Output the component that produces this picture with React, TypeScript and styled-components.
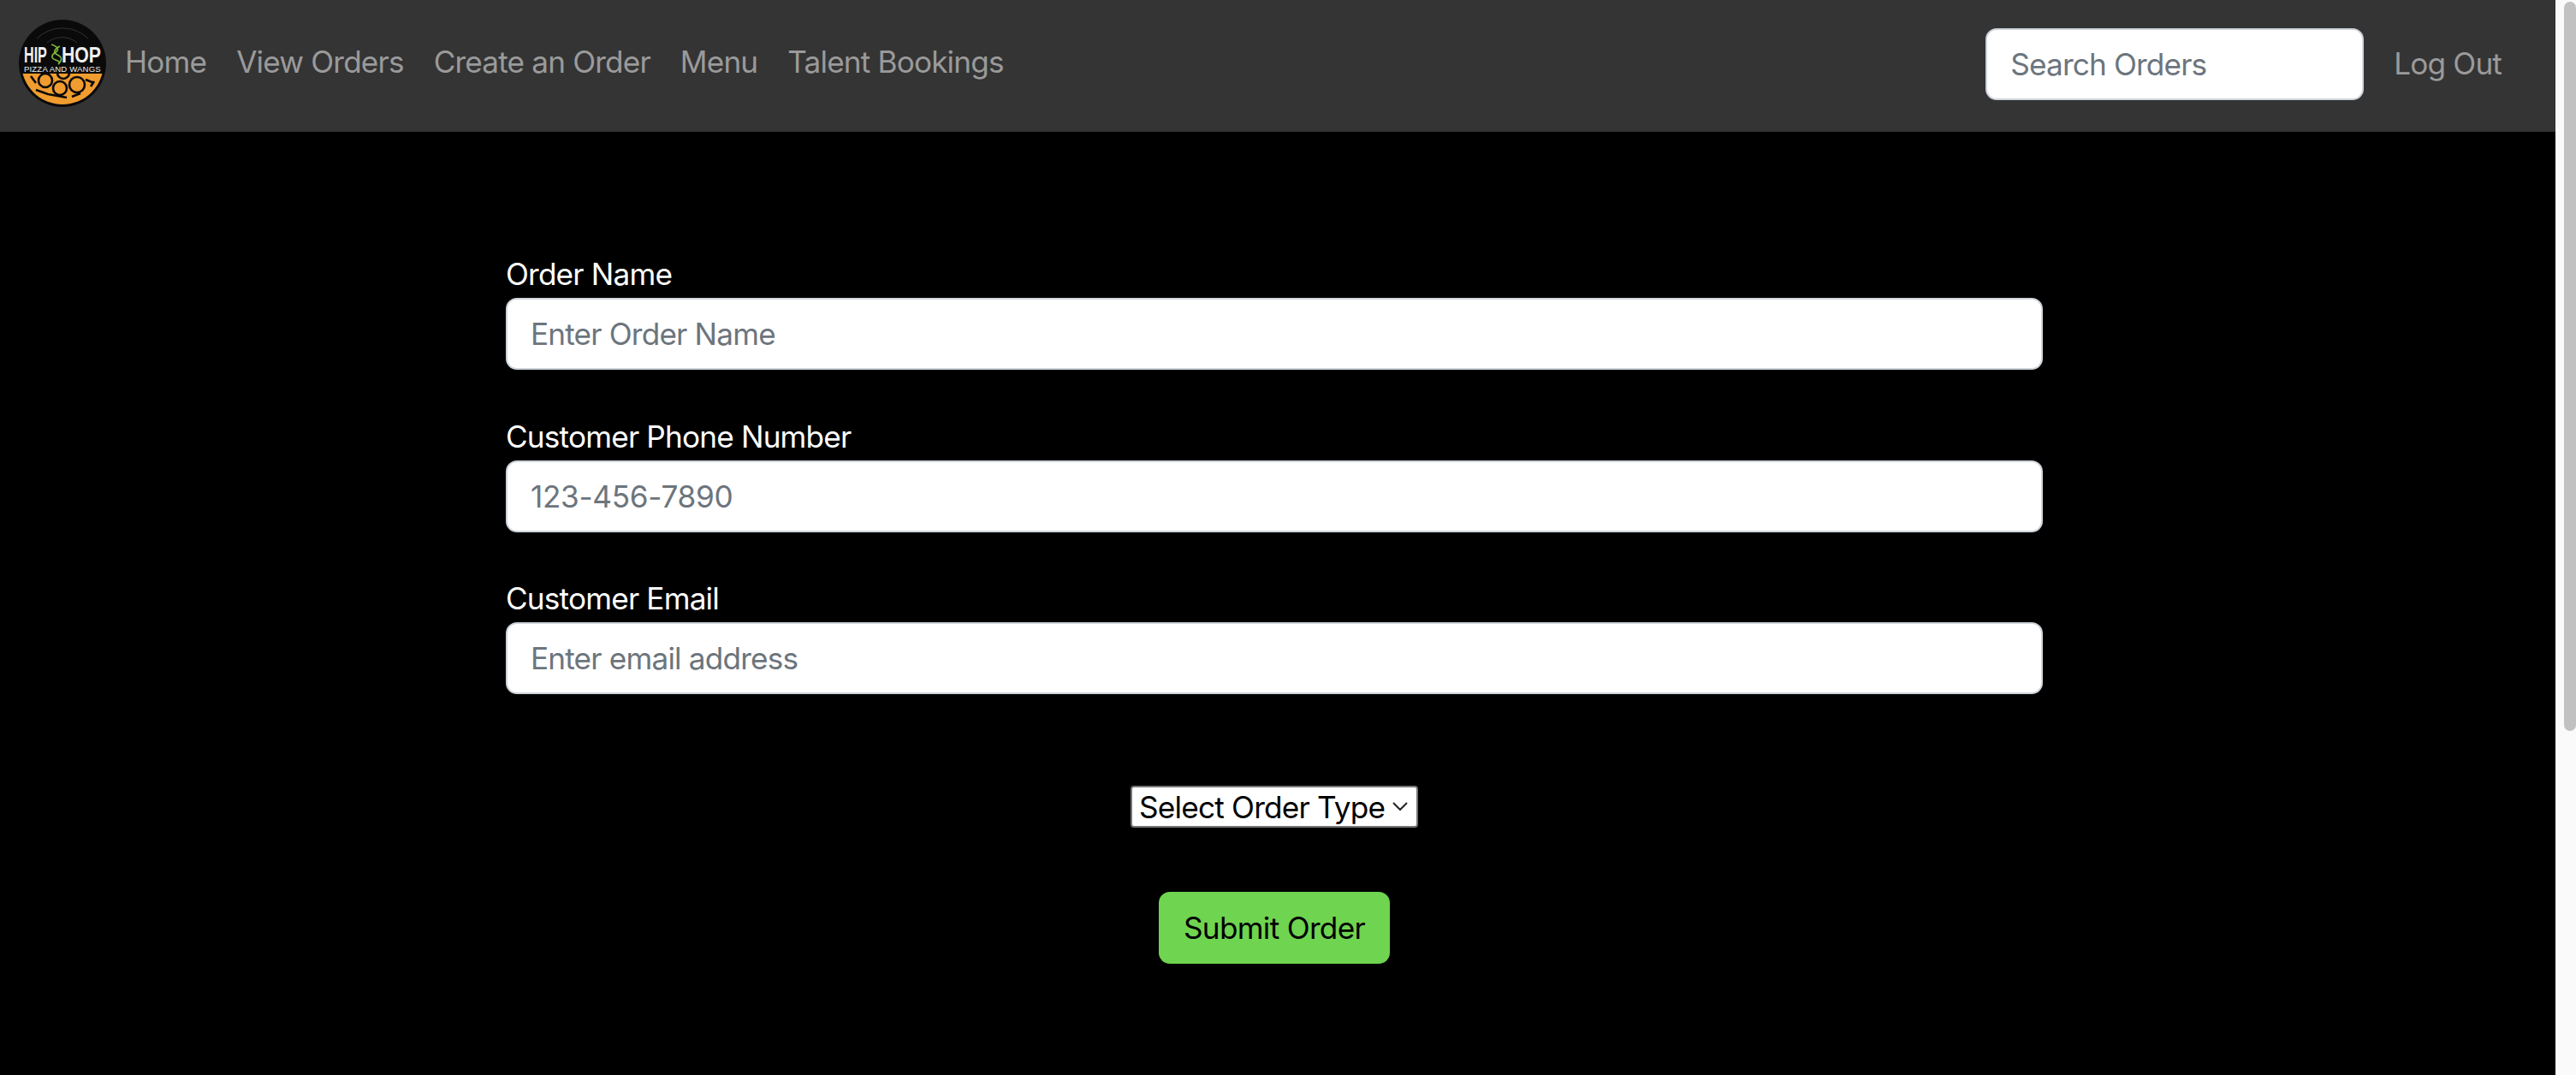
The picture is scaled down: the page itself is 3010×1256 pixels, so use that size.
import React from "react";
import styled, { createGlobalStyle } from "styled-components";

const Global = createGlobalStyle`
  html, body { margin: 0; padding: 0; background: #000; overflow: hidden; }
  body { font-family: Inter, "Liberation Sans", sans-serif; font-size: 35.2px; line-height: 1.5; }
  * { box-sizing: border-box; }
`;

const Shell = styled.div`
  display: flex;
  height: 1256px;
  overflow: hidden;
`;

const Page = styled.div`
  flex: 1;
  min-width: 0;
  background: #000;
`;

const ScrollTrack = styled.div`
  flex: none;
  width: 24px;
  padding: 2px 0 0 8px;
  background: #fafafa;
  border-left: 2px solid #fff;
`;

const ScrollThumb = styled.div`
  height: 852px;
  background: #c1c1c1;
  border-radius: 8px;
`;

const NavBar = styled.nav`
  height: 154px;
  background: #343434;
  display: flex;
  align-items: center;
  padding: 0 63px 0 22px;
`;

const LogoLink = styled.a`
  display: block;
  width: 102px;
  height: 102px;
  margin: 0 22px 6px 0;
  flex: none;
`;

const NavLinks = styled.div`
  display: flex;
  gap: 35px;
  margin-bottom: 10px;
`;

const NavLink = styled.a`
  color: #9a9a9a;
  font-size: 35.2px;
  letter-spacing: -0.85px;
  white-space: nowrap;
`;

const NavRight = styled.div`
  margin-left: auto;
  display: flex;
  align-items: center;
  gap: 35px;
  margin-bottom: 5px;
`;

const SearchInput = styled.input`
  width: 442px;
  height: 84px;
  padding: 0 27px;
  font: inherit;
  letter-spacing: -0.85px;
  color: #212529;
  background: #fff;
  border: 2px solid #ced4da;
  border-radius: 13px;
  outline: none;
  &::placeholder { color: #6c757d; opacity: 1; }
`;

const Main = styled.main`
  width: 1796px;
  margin-left: 591px;
  padding-top: 141px;
  display: flex;
  flex-direction: column;
`;

const Field = styled.div`
  display: flex;
  flex-direction: column;
  margin-bottom: 52.5px;
`;

const Label = styled.label`
  color: #fff;
  font-size: 35.2px;
  line-height: 50px;
  padding-bottom: 3px;
  letter-spacing: -0.83px;
`;

const TextInput = styled.input<{ $spacing: number }>`
  height: 84px;
  padding: 0 27px;
  font: inherit;
  letter-spacing: ${(p) => p.$spacing}px;
  color: #212529;
  background: #fff;
  border: 2px solid #ced4da;
  border-radius: 13px;
  outline: none;
  &::placeholder { color: #6c757d; opacity: 1; }
`;

const SelectRow = styled.div`
  display: flex;
  justify-content: center;
  margin-top: 54.5px;
`;

const SelectBox = styled.div`
  width: 336px;
  height: 49px;
  background: #fff;
  border: 2px solid #767676;
  border-radius: 4px;
  color: #000;
  display: flex;
  align-items: center;
  justify-content: space-between;
  padding: 2px 9px 0 8px;
  font-size: 35.2px;
  letter-spacing: -0.8px;
  white-space: nowrap;
`;

const Chevron = styled.svg`
  width: 20px;
  height: 12px;
  flex: none;
  margin-bottom: 4px;
`;

const SubmitRow = styled.div`
  display: flex;
  justify-content: center;
  margin-top: 75px;
`;

const SubmitButton = styled.button`
  width: 270px;
  height: 84px;
  padding: 0;
  background: #6fd44f;
  border: none;
  border-radius: 13px;
  color: #000;
  font: inherit;
  letter-spacing: -0.7px;
`;

const Logo = () => (
  <svg viewBox="0 0 102 102" width="102" height="102">
    <defs>
      <clipPath id="lowerHalf">
        <rect x="0" y="63" width="102" height="39" />
      </clipPath>
    </defs>
    <circle cx="51" cy="51" r="51" fill="#0a0a0a" />
    <path d="M21 22a43 43 0 0 1 60 0M33 27a27 27 0 0 1 35 0" fill="none" stroke="#3c3c3c" strokeWidth="0.8" />
    <g clipPath="url(#lowerHalf)">
      <circle cx="51" cy="51" r="48" fill="#f09c2f" />
      <g fill="none" stroke="#0a0a0a" strokeWidth="2.6">
        <circle cx="31" cy="71" r="8" />
        <circle cx="48" cy="80" r="8" />
        <circle cx="68" cy="76" r="9" />
        <circle cx="52" cy="62" r="7" />
        <path d="M14 66l6 8M20 82l14 5M34 87l22 4M62 90l10-4M78 70l10 4M88 72l-4 6" />
      </g>
    </g>
    <text transform="translate(6 50) scale(.645 1)" fontFamily="Liberation Sans, sans-serif" fontWeight="700" fontSize="25" fill="#eee">HIP</text>
    <text transform="translate(50 50) scale(.85 1)" fontFamily="Liberation Sans, sans-serif" fontWeight="700" fontSize="25" fill="#eee">HOP</text>
    <path d="M38 29c7 2 10 6 5 9s-6 7 0 9c5 2 6 3 3 5M48 31c-6 3-9 7-3 10s6 6 1 11" fill="none" stroke="#7fb93c" strokeWidth="1.6" />
    <text x="6" y="60.5" fontFamily="Liberation Sans, sans-serif" fontSize="9.6" fill="#eee" letterSpacing="0.15">PIZZA AND WANGS</text>
  </svg>
);

const fields = [
  { label: "Order Name", placeholder: "Enter Order Name", spacing: -0.83 },
  { label: "Customer Phone Number", placeholder: "123-456-7890", spacing: -0.33 },
  { label: "Customer Email", placeholder: "Enter email address", spacing: -0.83 },
];

const links = ["Home", "View Orders", "Create an Order", "Menu", "Talent Bookings"];

export default function App() {
  return (
    <Shell>
      <Global />
      <Page>
        <NavBar>
          <LogoLink>
            <Logo />
          </LogoLink>
          <NavLinks>
            {links.map((l) => (
              <NavLink key={l}>{l}</NavLink>
            ))}
          </NavLinks>
          <NavRight>
            <SearchInput placeholder="Search Orders" />
            <NavLink>Log Out</NavLink>
          </NavRight>
        </NavBar>
        <Main>
          {fields.map((f) => (
            <Field key={f.label}>
              <Label>{f.label}</Label>
              <TextInput placeholder={f.placeholder} $spacing={f.spacing} />
            </Field>
          ))}
          <SelectRow>
            <SelectBox>
              Select Order Type
              <Chevron viewBox="0 0 20 12">
                <path d="M2 2l8 8 8-8" fill="none" stroke="#222" strokeWidth="2" />
              </Chevron>
            </SelectBox>
          </SelectRow>
          <SubmitRow>
            <SubmitButton>Submit Order</SubmitButton>
          </SubmitRow>
        </Main>
      </Page>
      <ScrollTrack>
        <ScrollThumb />
      </ScrollTrack>
    </Shell>
  );
}
